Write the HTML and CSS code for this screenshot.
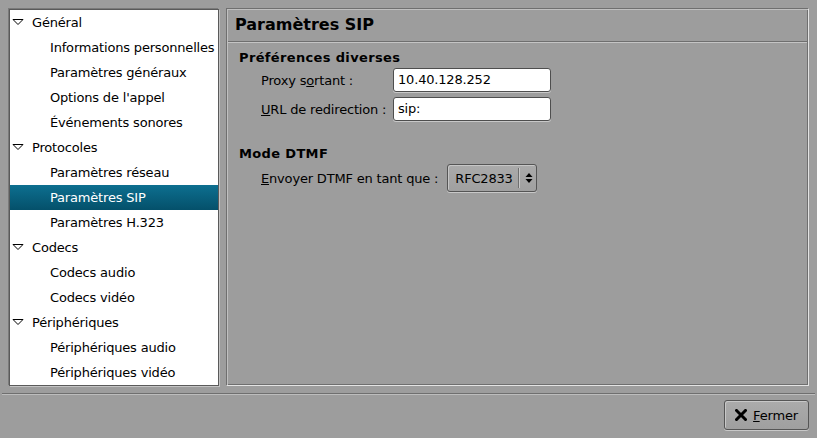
FILE: index.html
```html
<!DOCTYPE html>
<html lang="fr">
<head>
<meta charset="utf-8">
<title>Paramètres SIP</title>
<link rel="stylesheet" href="styles.css">
</head>
<body>
<div class="window">
  <div class="main">
    <div class="tree">
      <div class="row parent"><svg class="exp" width="12" height="8" viewBox="0 0 12 8"><path d="M1 1.5 H11 L6 6.5 Z" fill="none" stroke="#000" stroke-width="1"/></svg><span>Général</span></div>
      <div class="row child">Informations personnelles</div>
      <div class="row child">Paramètres généraux</div>
      <div class="row child">Options de l'appel</div>
      <div class="row child">Événements sonores</div>
      <div class="row parent"><svg class="exp" width="12" height="8" viewBox="0 0 12 8"><path d="M1 1.5 H11 L6 6.5 Z" fill="none" stroke="#000" stroke-width="1"/></svg><span>Protocoles</span></div>
      <div class="row child">Paramètres réseau</div>
      <div class="row child selected">Paramètres SIP</div>
      <div class="row child">Paramètres H.323</div>
      <div class="row parent"><svg class="exp" width="12" height="8" viewBox="0 0 12 8"><path d="M1 1.5 H11 L6 6.5 Z" fill="none" stroke="#000" stroke-width="1"/></svg><span>Codecs</span></div>
      <div class="row child">Codecs audio</div>
      <div class="row child">Codecs vidéo</div>
      <div class="row parent"><svg class="exp" width="12" height="8" viewBox="0 0 12 8"><path d="M1 1.5 H11 L6 6.5 Z" fill="none" stroke="#000" stroke-width="1"/></svg><span>Périphériques</span></div>
      <div class="row child">Périphériques audio</div>
      <div class="row child">Périphériques vidéo</div>
    </div>
    <div class="panel">
      <div class="panel-title">Paramètres SIP</div>
      <div class="panel-body">
        <div class="section">
          <div class="section-title">Préférences diverses</div>
          <div class="form-grid">
            <span class="label">Proxy s<u>o</u>rtant :</span>
            <div class="entry">10.40.128.252</div>
            <span class="label"><u>U</u>RL de redirection :</span>
            <div class="entry">sip:</div>
          </div>
        </div>
        <div class="section second">
          <div class="section-title">Mode DTMF</div>
          <div class="form-row">
            <span class="label"><u>E</u>nvoyer DTMF en tant que :</span>
            <div class="combo">
              <span class="combo-text">RFC2833</span>
              <span class="combo-sep"></span>
              <svg class="combo-arrows" width="8" height="12" viewBox="0 0 8 12"><path d="M4 1 L7.5 5 H0.5 Z M4 11 L7.5 7 H0.5 Z" fill="#000"/></svg>
            </div>
          </div>
        </div>
      </div>
    </div>
  </div>
  <div class="sep"></div>
  <div class="actions">
    <button class="btn"><svg class="xicon" width="12" height="12" viewBox="0 0 12 12"><path d="M1.5 1.5 L10.5 10.5 M10.5 1.5 L1.5 10.5" stroke="#000" stroke-width="3" stroke-linecap="square"/></svg><span><u>F</u>ermer</span></button>
  </div>
</div>
</body>
</html>
```

FILE: styles.css
```css
html, body {
  margin: 0;
  padding: 0;
}
body {
  width: 817px;
  height: 438px;
  background: #9d9d9d;
  font-family: "DejaVu Sans", "Liberation Sans", sans-serif;
  font-size: 13px;
  letter-spacing: -0.18px;
  color: #000;
  overflow: hidden;
}
.window {
  padding: 8px 0 0 0;
}
.main {
  display: flex;
  gap: 7px;
  height: 378px;
  padding: 0 8px 0 8px;
}
.tree {
  width: 208px;
  background: #fff;
  border: 1px solid #5a5a5a;
  box-shadow: -1px -1px 0 #7a7a7a, 1px 1px 0 #c4c4c4;
  margin: 1px 0 0 1px;
  height: 375px;
  display: flex;
  flex-direction: column;
}
.row {
  height: 25px;
  line-height: 25px;
  white-space: nowrap;
  display: flex;
  align-items: center;
}
.parent {
  padding-left: 2px;
}
.exp {
  margin-right: 8px;
  margin-top: -2px;
}
.child {
  padding-left: 40px;
}
.selected {
  background: linear-gradient(#0d6f90, #04506a);
  color: #fff;
}
.panel {
  flex: 1;
  border: 1px solid;
  border-color: #6f6f6f #e4e4e4 #e4e4e4 #6f6f6f;
  box-shadow: inset 1px 1px 0 #c0c0c0, inset -1px -1px 0 #6f6f6f;
  display: flex;
  flex-direction: column;
}
.panel-title {
  height: 32px;
  line-height: 31px;
  font-size: 16px;
  font-weight: bold;
  letter-spacing: 0;
  padding-left: 7px;
  margin: 0 1px;
  border-bottom: 1px solid #6f6f6f;
  box-shadow: 0 1px 0 #c4c4c4;
}
.panel-body {
  padding: 8px 12px 0 12px;
}
.section-title {
  font-weight: bold;
  letter-spacing: 0.35px;
  line-height: 16px;
  height: 16px;
}
.form-grid {
  margin-top: 2px;
  padding-left: 22px;
  display: grid;
  grid-template-columns: 126px 158px;
  column-gap: 6px;
  row-gap: 5px;
  align-items: center;
}
.label {
  white-space: nowrap;
}
.entry {
  height: 22px;
  line-height: 22px;
  background: #fff;
  border: 1px solid #4e4e4e;
  border-radius: 3px;
  padding-left: 4px;
  box-shadow: 0 1px 0 #c8c8c8;
}
.second {
  margin-top: 25px;
}
.form-row {
  margin-top: 2px;
  padding-left: 22px;
  display: flex;
  align-items: center;
  gap: 9px;
}
.combo {
  width: 90px;
  height: 28px;
  border: 1px solid #555;
  border-radius: 3px;
  background: linear-gradient(#aaaaaa, #a0a0a0);
  box-shadow: inset 1px 1px 0 #c6c6c6, 0 1px 0 #c8c8c8;
  display: flex;
  align-items: center;
  box-sizing: border-box;
}
.combo-text {
  padding-left: 7px;
  width: 63px;
}
.combo-sep {
  width: 1px;
  height: 20px;
  background: #6f6f6f;
  box-shadow: 1px 0 0 #c8c8c8;
}
.combo-arrows {
  margin-left: 6px;
}
.sep {
  margin: 7px 2px 0 2px;
  height: 1px;
  background: #6f6f6f;
  box-shadow: 0 1px 0 #bdbdbd;
}
.actions {
  display: flex;
  justify-content: flex-end;
  padding: 6px 8px 0 0;
}
.btn {
  width: 85px;
  height: 30px;
  border: 1px solid #555;
  border-radius: 3px;
  background: linear-gradient(#ababab, #9f9f9f);
  box-shadow: inset 1px 1px 0 #c8c8c8, 0 1px 0 #c8c8c8;
  font-family: "DejaVu Sans", "Liberation Sans", sans-serif;
  font-size: 13px;
  letter-spacing: -0.18px;
  color: #000;
  display: flex;
  align-items: center;
  justify-content: center;
  gap: 6px;
  padding: 0;
}
```
